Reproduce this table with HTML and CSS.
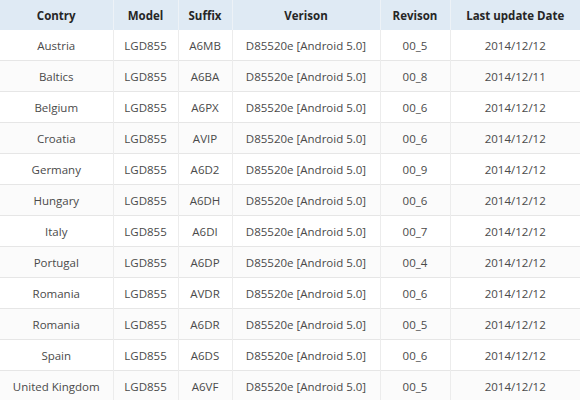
FILE: index.html
```html
<!DOCTYPE html>
<html>
<head>
<meta charset="utf-8">
<link rel="stylesheet" href="styles.css">
</head>
<body>
<table class="fw">
  <colgroup>
    <col class="c1"><col class="c2"><col class="c3"><col class="c4"><col class="c5"><col class="c6">
  </colgroup>
  <thead>
    <tr><th>Contry</th><th>Model</th><th>Suffix</th><th>Verison</th><th>Revison</th><th>Last update Date</th></tr>
  </thead>
  <tbody>
    <tr><td>Austria</td><td>LGD855</td><td>A6MB</td><td>D85520e [Android 5.0]</td><td>00_5</td><td>2014/12/12</td></tr>
    <tr><td>Baltics</td><td>LGD855</td><td>A6BA</td><td>D85520e [Android 5.0]</td><td>00_8</td><td>2014/12/11</td></tr>
    <tr><td>Belgium</td><td>LGD855</td><td>A6PX</td><td>D85520e [Android 5.0]</td><td>00_6</td><td>2014/12/12</td></tr>
    <tr><td>Croatia</td><td>LGD855</td><td>AVIP</td><td>D85520e [Android 5.0]</td><td>00_6</td><td>2014/12/12</td></tr>
    <tr><td>Germany</td><td>LGD855</td><td>A6D2</td><td>D85520e [Android 5.0]</td><td>00_9</td><td>2014/12/12</td></tr>
    <tr><td>Hungary</td><td>LGD855</td><td>A6DH</td><td>D85520e [Android 5.0]</td><td>00_6</td><td>2014/12/12</td></tr>
    <tr><td>Italy</td><td>LGD855</td><td>A6DI</td><td>D85520e [Android 5.0]</td><td>00_7</td><td>2014/12/12</td></tr>
    <tr><td>Portugal</td><td>LGD855</td><td>A6DP</td><td>D85520e [Android 5.0]</td><td>00_4</td><td>2014/12/12</td></tr>
    <tr><td>Romania</td><td>LGD855</td><td>AVDR</td><td>D85520e [Android 5.0]</td><td>00_6</td><td>2014/12/12</td></tr>
    <tr><td>Romania</td><td>LGD855</td><td>A6DR</td><td>D85520e [Android 5.0]</td><td>00_5</td><td>2014/12/12</td></tr>
    <tr><td>Spain</td><td>LGD855</td><td>A6DS</td><td>D85520e [Android 5.0]</td><td>00_6</td><td>2014/12/12</td></tr>
    <tr><td>United Kingdom</td><td>LGD855</td><td>A6VF</td><td>D85520e [Android 5.0]</td><td>00_5</td><td>2014/12/12</td></tr>
  </tbody>
</table>
</body>
</html>
```

FILE: styles.css
```css
html, body {
  margin: 0;
  padding: 0;
  background: #ffffff;
}
body {
  width: 580px;
  height: 400px;
  overflow: hidden;
  font-family: "Open Sans", "DejaVu Sans", sans-serif;
}
.fw {
  width: 580px;
  border-collapse: collapse;
  table-layout: fixed;
}
.c1 { width: 113px; }
.c2 { width: 65px; }
.c3 { width: 54px; }
.c4 { width: 148px; }
.c5 { width: 70px; }
.c6 { width: 130px; }
.fw th {
  height: 30px;
  padding: 0;
  background: #dfeaf4;
  color: #262626;
  font-size: 11.5px;
  font-weight: 700;
  text-align: center;
  vertical-align: middle;
  border-left: 1px solid #edf2f7;
}
.fw th:first-child { border-left: none; }
.fw td {
  height: 30px;
  padding: 0;
  color: #4a4a4a;
  font-size: 11.5px;
  text-align: center;
  vertical-align: middle;
  border-left: 1px solid #ececec;
  border-top: 1px solid #e6e6e6;
}
.fw td:first-child { border-left: none; }
.fw tbody tr:first-child td { border-top: none; }
.fw tbody tr:nth-child(even) td { background: #fbfbfb; }
```
